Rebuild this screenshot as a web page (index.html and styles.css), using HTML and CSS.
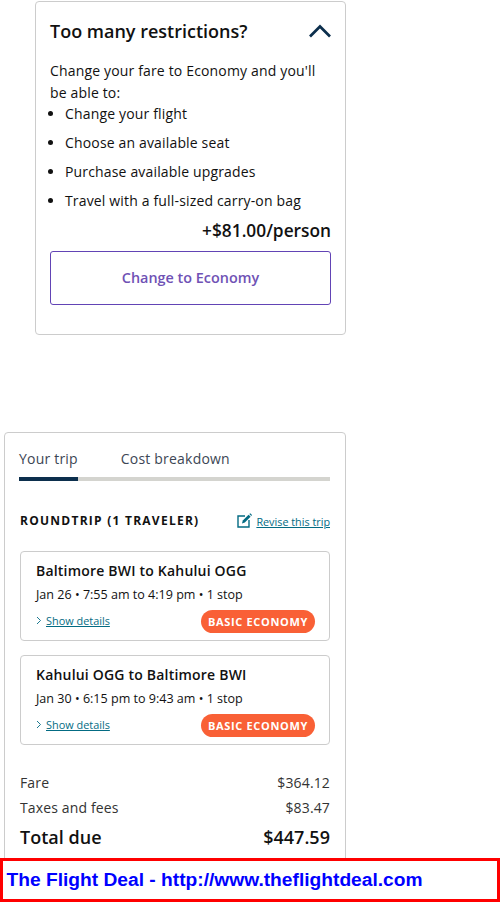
FILE: index.html
```html
<!DOCTYPE html>
<html lang="en">
<head>
<meta charset="utf-8">
<title>Trip summary</title>
<link rel="stylesheet" href="styles.css">
</head>
<body>
<main class="page">
  <section class="card upsell">
    <div class="upsell-head">
      <h2>Too many restrictions?</h2>
      <svg class="chevron" width="22" height="14" viewBox="0 0 22 14"><path d="M1 12.5 L11 2.5 L21 12.5" fill="none" stroke="#0c2f4d" stroke-width="2.7"/></svg>
    </div>
    <p class="intro">Change your fare to Economy and you'll be able to:</p>
    <ul class="perks">
      <li>Change your flight</li>
      <li>Choose an available seat</li>
      <li>Purchase available upgrades</li>
      <li>Travel with a full-sized carry-on bag</li>
    </ul>
    <div class="price">+$81.00/person</div>
    <button class="change-btn">Change to Economy</button>
  </section>

  <section class="card trip">
    <div class="tabs">
      <span class="tab active">Your trip</span>
      <span class="tab">Cost breakdown</span>
    </div>
    <div class="trip-head">
      <h3>ROUNDTRIP (1 TRAVELER)</h3>
      <a class="revise">
        <svg width="15" height="15" viewBox="0 0 15 15"><path d="M8 3 H1 V14 H12 V7" fill="none" stroke="#036b83" stroke-width="1.4"/><path d="M5 10.5 L5.8 7.6 L11.6 1.8 L13.6 3.8 L7.8 9.6 Z" fill="#036b83"/><path d="M12.4 1 L13.2 .3 L15 2.1 L14.3 2.9 Z" fill="#036b83"/></svg>
        <span>Revise this trip</span>
      </a>
    </div>
    <article class="flight">
      <h4>Baltimore BWI to Kahului OGG</h4>
      <p class="times">Jan 26 • 7:55 am to 4:19 pm • 1 stop</p>
      <div class="flight-foot">
        <a class="details"><svg width="6" height="9" viewBox="0 0 6 9"><path d="M1 1 L4.5 4.5 L1 8" fill="none" stroke="#036b83" stroke-width="0.9"/></svg><span>Show details</span></a>
        <span class="badge">BASIC ECONOMY</span>
      </div>
    </article>
    <article class="flight">
      <h4>Kahului OGG to Baltimore BWI</h4>
      <p class="times">Jan 30 • 6:15 pm to 9:43 am • 1 stop</p>
      <div class="flight-foot">
        <a class="details"><svg width="6" height="9" viewBox="0 0 6 9"><path d="M1 1 L4.5 4.5 L1 8" fill="none" stroke="#036b83" stroke-width="0.9"/></svg><span>Show details</span></a>
        <span class="badge">BASIC ECONOMY</span>
      </div>
    </article>
    <div class="costs">
      <div class="row"><span>Fare</span><span>$364.12</span></div>
      <div class="row"><span>Taxes and fees</span><span>$83.47</span></div>
      <div class="row total"><span>Total due</span><span>$447.59</span></div>
    </div>
  </section>
</main>
<div class="banner">The Flight Deal - http://www.theflightdeal.com</div>
</body>
</html>
```

FILE: styles.css
```css
* { box-sizing: border-box; }
html, body { margin: 0; padding: 0; }
body {
  width: 500px;
  height: 902px;
  overflow: hidden;
  position: relative;
  background: #fff;
  color: #111;
  font-family: "Open Sans", sans-serif;
}
.page { display: flex; flex-direction: column; padding-top: 1px; }
.card {
  border: 1px solid #ccc;
  border-radius: 4px;
  background: #fff;
}
.upsell {
  margin-left: 35px;
  width: 311px;
  height: 334px;
  padding: 0 14px;
}
.upsell-head {
  display: flex;
  justify-content: space-between;
  align-items: center;
  height: 58px;
}
.upsell-head h2 { margin: 0; font-size: 18px; font-weight: 600; line-height: 24px; }
.chevron { display: block; margin: 0 0 1px 0; }
.intro { margin: 0; font-size: 14px; line-height: 22px; letter-spacing: .16px; }
.perks { margin: 0; padding: 0 0 0 15px; font-size: 14px; line-height: 20px; letter-spacing: .16px; list-style: disc; }
.perks li { margin-bottom: 9px; }
.price {
  text-align: right;
  font-size: 17.3px;
  font-weight: 600;
  line-height: 24px;
  margin-top: -1px;
  margin-bottom: 8px;
}
.change-btn {
  display: block;
  width: 100%;
  height: 54px;
  padding: 0 0 2px;
  background: #fff;
  border: 1px solid #6244b5;
  border-radius: 3px;
  color: #6f52b5;
  font-family: inherit;
  font-size: 14.4px;
  font-weight: 600;
}
.trip {
  margin-top: 97px;
  margin-left: 4px;
  width: 342px;
  height: 480px;
  padding: 14px 15px 0 14px;
}
.tabs {
  display: flex;
  gap: 43px;
  height: 34px;
  border-bottom: 4px solid #d4d4cf;
  font-size: 14px;
  line-height: 24px;
  letter-spacing: .2px;
  color: #3c4654;
}
.tab { display: block; height: 34px; }
.tab.active { border-bottom: 4px solid #0c2f4d; }
.trip-head {
  display: flex;
  justify-content: space-between;
  align-items: center;
  margin: 27px 0 0 1px;
  height: 24px;
}
.trip-head h3 { margin: 0; font-size: 12px; font-weight: 700; letter-spacing: 1.25px; }
.revise { display: flex; align-items: center; gap: 4px; margin-top: 2px; color: #036b83; font-size: 10.8px; }
.revise svg { margin-top: -2px; }
.revise span { text-decoration: underline; }
.flight {
  margin: 0 0 14px 1px;
  height: 90px;
  border: 1px solid #ccc;
  border-radius: 4px;
  padding: 8px 14px 0 15px;
}
.trip-head + .flight { margin-top: 19px; }
.flight h4 { margin: 0; font-size: 14px; font-weight: 600; line-height: 22px; letter-spacing: .2px; }
.times { margin: 3px 0 0; font-size: 12.55px; line-height: 20px; }
.flight-foot {
  display: flex;
  justify-content: space-between;
  align-items: center;
  margin-top: 5px;
}
.details { display: flex; align-items: center; gap: 4px; margin-top: -2px; color: #036b83; font-size: 10.9px; }
.details span { text-decoration: underline; }
.badge {
  display: block;
  height: 23px;
  width: 114px;
  text-align: center;
  border-radius: 12px;
  background: #f96036;
  color: #fff;
  font-size: 11px;
  font-weight: 700;
  line-height: 23px;
  letter-spacing: .65px;
}
.costs { margin: 25px 0 0 1px; }
.row {
  display: flex;
  justify-content: space-between;
  font-size: 14px;
  line-height: 25px;
  letter-spacing: .14px;
  color: #333;
}
.row.total {
  font-size: 18px;
  font-weight: 600;
  line-height: 35px;
  letter-spacing: .02px;
  color: #111;
}
.banner {
  position: absolute;
  left: 0;
  top: 858px;
  width: 500px;
  height: 44px;
  border: 3px solid #f00;
  background: #fff;
  color: #00f;
  font-family: "Liberation Sans", Arial, sans-serif;
  font-size: 19.2px;
  font-weight: 700;
  line-height: 38px;
  padding-left: 3.5px;
}
```
